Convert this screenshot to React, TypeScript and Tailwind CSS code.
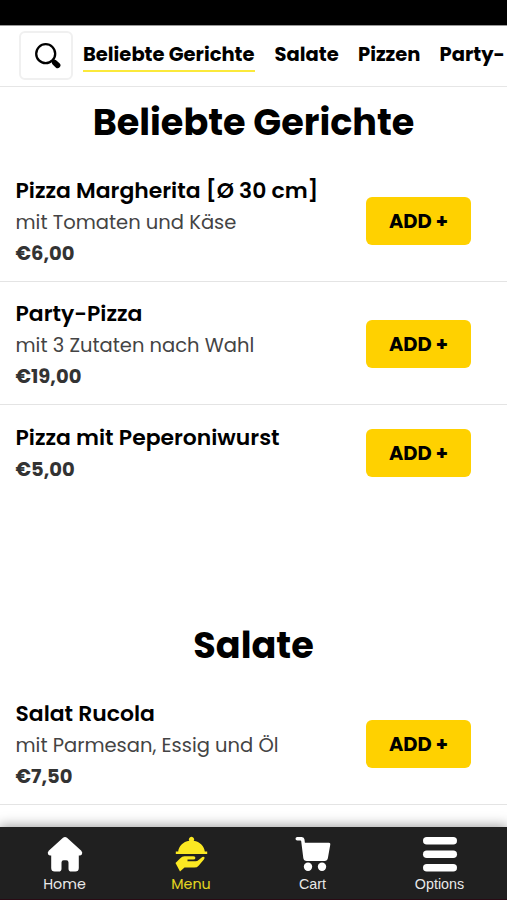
import type { ReactNode } from "react";

type Dish = {
  name: string;
  description?: string;
  price: string;
};

const popular: Dish[] = [
  { name: "Pizza Margherita [Ø 30 cm]", description: "mit Tomaten und Käse", price: "€6,00" },
  { name: "Party-Pizza", description: "mit 3 Zutaten nach Wahl", price: "€19,00" },
  { name: "Pizza mit Peperoniwurst", price: "€5,00" },
];

const salads: Dish[] = [
  { name: "Salat Rucola", description: "mit Parmesan, Essig und Öl", price: "€7,50" },
];

function DishRow({ dish, last = false }: { dish: Dish; last?: boolean }) {
  return (
    <article
      className={`flex items-center justify-between pr-9 pb-[13px] pl-[15.5px] ${last ? "pt-4" : "border-b border-[#e4e4e4] pt-[15px]"}`}
    >
      <div className="whitespace-nowrap">
        <h3 className="h-8 text-[21.9px] leading-[33px] font-semibold text-black">{dish.name}</h3>
        {dish.description && (
          <p className="h-[31px] text-[19.5px] leading-[33px] font-normal text-[#444]">{dish.description}</p>
        )}
        <p className="h-[31px] text-[19.5px] leading-[34px] font-bold text-[#333]">{dish.price}</p>
      </div>
      <button className="h-12 w-[105px] rounded-md bg-[#ffd100] text-[19.5px] leading-[50px] font-bold whitespace-nowrap text-black">
        ADD +
      </button>
    </article>
  );
}

function Tab({ label, width, icon, active = false }: {
  label: string;
  width: string;
  icon: ReactNode;
  active?: boolean;
}) {
  return (
    <a className={`flex flex-col items-center pt-[9px] ${width} ${active ? "text-[#fbe822]" : "text-white"}`}>
      {icon}
      <span className="mt-[2px] text-[14.3px] leading-5 opacity-90">{label}</span>
    </a>
  );
}

const HomeIcon = (
  <svg width="36" height="36" viewBox="0 0 36 36" fill="currentColor">
    <path d="M16 1.700Q18 .200 20 1.700L34.300 14.800Q36 16.800 34.800 18.600Q33.800 19.800 31.800 19.400V32Q31.800 35.500 28.300 35.500H24.300Q21.500 35.500 21.500 32.700V26.500Q21.500 24.300 19.300 24.300H16.700Q14.500 24.300 14.500 26.500V32.700Q14.500 35.500 11.700 35.500H7.700Q4.200 35.500 4.200 32V19.400Q2.200 19.800 1.200 18.600Q0 16.800 1.700 14.800Z" />
  </svg>
);

const DishIcon = (
  <svg width="36" height="36" viewBox="0 0 36 36" fill="currentColor">
    <path d="M16.300 4.800A2.600 2.600 0 1 1 20.700 4.800C27 5.800 31.200 10.200 31.800 15.500H34.200V17.900H2.800V15.500H5.200C5.800 10.200 10 5.800 16.300 4.800Z" />
    <path d="M2.500 27L7.300 22.200Q9 20.200 11.500 20.200H20.500Q22.600 20.200 22.400 22Q22.200 23.600 20.200 23.600H14.500V25.200H22.500Q24.300 25.200 25.600 24L29.300 20.900Q30.900 20.300 31.500 21.300Q31.800 22.200 30.900 23.400L25.600 29.700Q24 31.600 21.400 31.600H11.500L7 35.500Z" />
  </svg>
);

const CartIcon = (
  <svg width="36" height="36" viewBox="0 0 36 36" fill="currentColor">
    <path d="M2.300 1H6.800Q9.200 1 9.500 3.500L9.900 6.800H34Q35.600 6.800 35.300 8.500L32.900 21.900Q32.400 24.900 29.500 24.900H11.700Q8.700 24.900 8.300 22L6.200 5.300Q6.100 4.600 5.500 4.600H2.300Q.500 4.600 .500 2.800Q.500 1 2.300 1Z" />
    <circle cx="13" cy="30.800" r="4.200" />
    <circle cx="27" cy="30.800" r="4.200" />
  </svg>
);

const OptionsIcon = (
  <svg width="36" height="36" viewBox="0 0 36 36" fill="currentColor">
    <rect x="1" y="1" width="34" height="7.500" rx="3.750" />
    <rect x="1" y="14.500" width="34" height="7.500" rx="3.750" />
    <rect x="1" y="28" width="34" height="7.500" rx="3.750" />
  </svg>
);

export default function App() {
  return (
    <div className="flex h-[900px] w-[507px] flex-col overflow-hidden bg-white font-['Poppins','Inter',sans-serif]">
      <div className="h-[25px] shrink-0 bg-black" />
      <header className="flex h-[62px] shrink-0 items-center border-t border-b border-t-[#999] border-b-[#e6e6e6] pb-[2px] pl-[19px]">
        <button className="flex h-[49px] w-[54px] shrink-0 items-center justify-center rounded-md border-2 border-[#f0f0f0]">
          <svg className="mt-[2px] ml-[4px]" width="26" height="26" viewBox="0 0 26 26" fill="none" stroke="black">
            <circle cx="10.700" cy="10.700" r="9.500" strokeWidth="2.300" />
            <path d="M17.300 17.300L20 20" strokeWidth="3" />
            <path d="M19.800 19.800L22.600 22.400" strokeWidth="5.600" strokeLinecap="round" />
          </svg>
        </button>
        <nav className="ml-[10px] flex h-[34px] gap-[19.5px] text-[19.5px] leading-[33px] font-bold whitespace-nowrap text-black">
          <a className="h-[34px] w-[172px] border-b-[2px] border-[#fbe93b]">Beliebte Gerichte</a>
          <a className="w-16">Salate</a>
          <a className="w-[62px]">Pizzen</a>
          <a className="w-[67px]">Party-</a>
        </nav>
      </header>

      <main className="h-[740px] shrink-0 overflow-hidden">
        <h2 className="h-[72px] pt-[10px] text-center text-[36.6px] leading-[51px] font-bold text-black">Beliebte Gerichte</h2>
        {popular.map((dish, i) => (
          <DishRow key={dish.name} dish={dish} last={i === popular.length - 1} />
        ))}
        <h2 className="mt-[113px] h-[72px] pt-[10px] text-center text-[36.6px] leading-[51px] font-bold text-black">Salate</h2>
        {salads.map((dish) => (
          <DishRow key={dish.name} dish={dish} />
        ))}
      </main>

      <footer className="relative flex h-[73px] shrink-0 border-b border-[#2a0a14] bg-[#202020] shadow-[0_0_12px_1px_rgba(0,0,0,0.4)]">
        <Tab label="Home" width="w-[129px]" icon={HomeIcon} />
        <Tab label="Menu" width="w-[124px]" icon={DishIcon} active />
        <Tab label="Cart" width="w-[119px] font-['Liberation_Sans',sans-serif]" icon={CartIcon} />
        <Tab label="Options" width="w-[135px] font-['Liberation_Sans',sans-serif]" icon={OptionsIcon} />
      </footer>
    </div>
  );
}
